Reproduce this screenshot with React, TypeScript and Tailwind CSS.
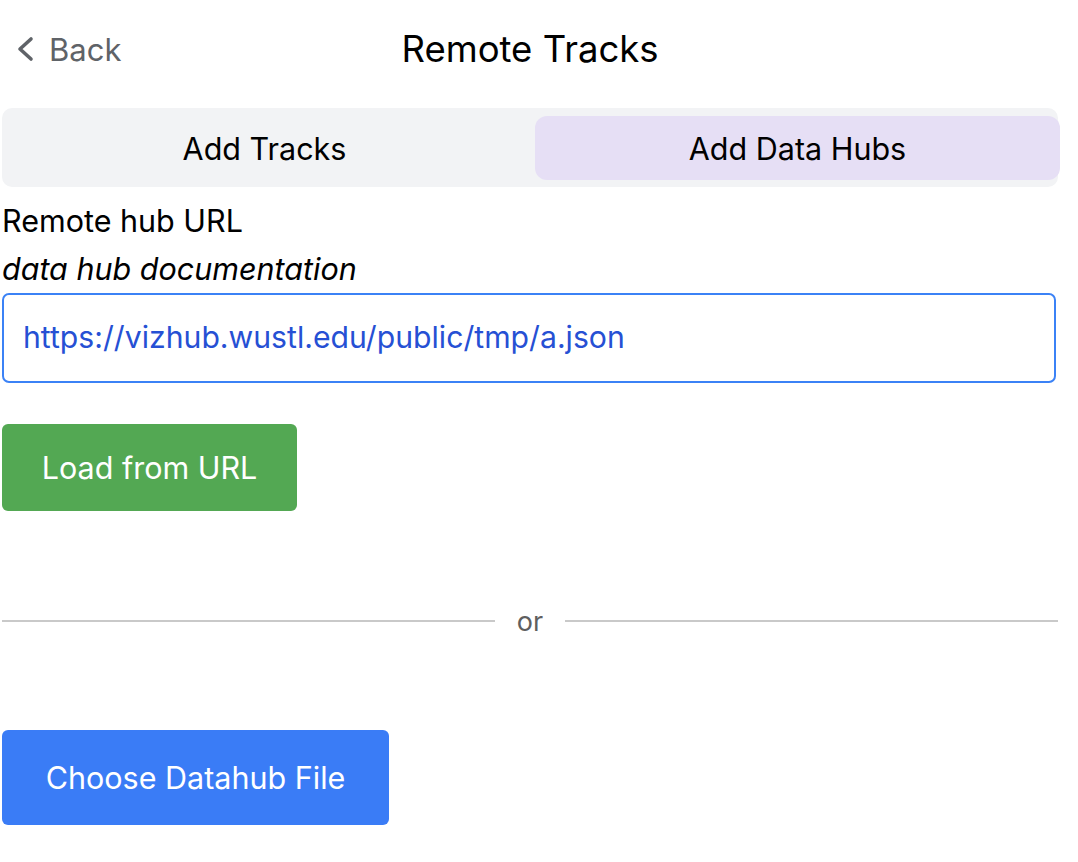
import React from "react";

export default function App() {
  return (
    <div
      className="w-[1078px] h-[862px] bg-white pl-[2px] pr-[20px] text-black"
      style={{ fontFamily: "Inter, 'Noto Sans', sans-serif" }}
    >
      <div className="relative h-[98px] flex items-center justify-center">
        <div className="absolute left-[14px] top-[31px] h-[36px] flex items-center gap-[15px] text-[#5f6368]">
          <svg width="18" height="26" viewBox="0 0 18 26" fill="none">
            <path d="M15 3 L4 13 L15 23" stroke="#5f6368" strokeWidth="3.6" strokeLinecap="round" strokeLinejoin="round" />
          </svg>
          <span className="text-[31px] leading-none">Back</span>
        </div>
        <h1 className="text-[36.5px] leading-none text-black">Remote Tracks</h1>
      </div>
      <div className="mt-[10px] h-[79px] bg-[#f2f3f5] rounded-[10px] flex items-center p-0">
        <div className="flex-1 flex items-center justify-center text-[30.5px] h-[64px] pt-[2px]">Add Tracks</div>
        <div className="flex-1 flex items-center justify-center text-[30.5px] h-[64px] pt-[2px] bg-[#e6dff5] rounded-[12px] ml-[8px] mr-[-2px]">Add Data Hubs</div>
      </div>
      <div className="mt-[10px] text-[30.5px] leading-[48px]">Remote hub URL</div>
      <div className="text-[30.5px] leading-[48px] italic">data hub documentation</div>
      <div className="h-[90px] mr-[2px] border-2 border-[#3b82f6] rounded-[7px] flex items-center pl-[19px] text-[30.2px] text-[#2650d4]">
        https://vizhub.wustl.edu/public/tmp/a.json
      </div>
      <button className="mt-[41px] h-[87px] w-[295px] bg-[#53a853] rounded-[6px] text-white text-[30.5px] flex items-center justify-center">
        Load from URL
      </button>
      <div className="mt-[96px] h-[28px] flex items-center">
        <div className="flex-1 h-[2px] bg-[#c9c9c9]"></div>
        <span className="px-[22px] text-[27px] text-[#5f5f5f] leading-none">or</span>
        <div className="flex-1 h-[2px] bg-[#c9c9c9]"></div>
      </div>
      <button className="mt-[95px] h-[95px] w-[387px] bg-[#3a7cf6] rounded-[6px] text-white text-[30.5px] flex items-center justify-center">
        Choose Datahub File
      </button>
    </div>
  );
}
